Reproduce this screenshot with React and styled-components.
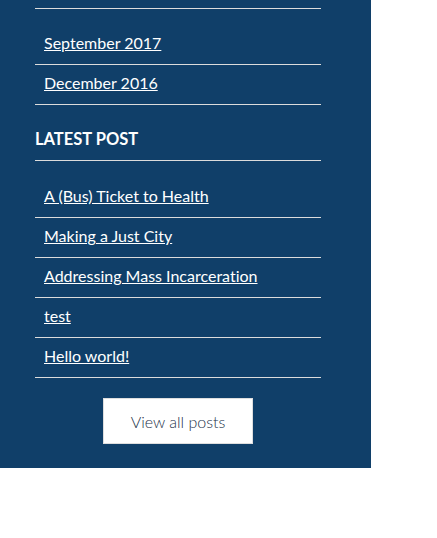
import React from "react";
import styled, { createGlobalStyle } from "styled-components";

const Global = createGlobalStyle`
  html, body { margin: 0; padding: 0; background: #fff; }
  body {
    font-family: Lato, "Open Sans", sans-serif;
    font-variant-ligatures: none;
    font-feature-settings: "liga" 0, "clig" 0;
  }
`;

const Panel = styled.aside`
  width: 371px;
  box-sizing: border-box;
  background: #103f69;
  padding: 8px 50px 24px 35px;
`;

const Widget = styled.section`
  width: 286px;
  & + & { margin-top: 24px; }
`;

const Heading = styled.h3`
  margin: 0;
  padding: 0 0 11px;
  font-size: 16.5px;
  line-height: 20px;
  font-weight: 700;
  color: #fff;
  text-transform: uppercase;
  border-bottom: 1px solid #dcdcdc;
`;

const List = styled.ul`
  list-style: none;
  margin: 0;
  padding: ${(p) => p.$padTop}px 0 0;
  border-top: ${(p) => (p.$topRule ? "1px solid #dcdcdc" : "none")};
`;

const Item = styled.li`
  padding: 8px 10px 11px 9px;
  border-bottom: 1px solid #dcdcdc;
  font-size: 16px;
  line-height: 20px;
`;

const Link = styled.a`
  color: #fff;
  text-decoration: underline;
`;

const ButtonRow = styled.div`
  display: flex;
  justify-content: center;
  margin-top: 20px;
`;

const Button = styled.a`
  display: flex;
  align-items: center;
  justify-content: center;
  width: 150px;
  height: 46px;
  box-sizing: border-box;
  background: #fff;
  border: 1px solid #dedede;
  color: #1c324a;
  font-size: 16px;
  font-weight: 300;
  text-decoration: none;
`;

const archives = ["September 2017", "December 2016"];
const posts = [
  "A (Bus) Ticket to Health",
  "Making a Just City",
  "Addressing Mass Incarceration",
  "test",
  "Hello world!",
];

export default function App() {
  return (
    <>
      <Global />
      <Panel>
        <Widget>
          <List $topRule $padTop={16}>
            {archives.map((a) => (
              <Item key={a}>
                <Link href="#">{a}</Link>
              </Item>
            ))}
          </List>
        </Widget>
        <Widget>
          <Heading>Latest Post</Heading>
          <List $padTop={17}>
            {posts.map((p) => (
              <Item key={p}>
                <Link href="#">{p}</Link>
              </Item>
            ))}
          </List>
          <ButtonRow>
            <Button href="#">View all posts</Button>
          </ButtonRow>
        </Widget>
      </Panel>
    </>
  );
}
